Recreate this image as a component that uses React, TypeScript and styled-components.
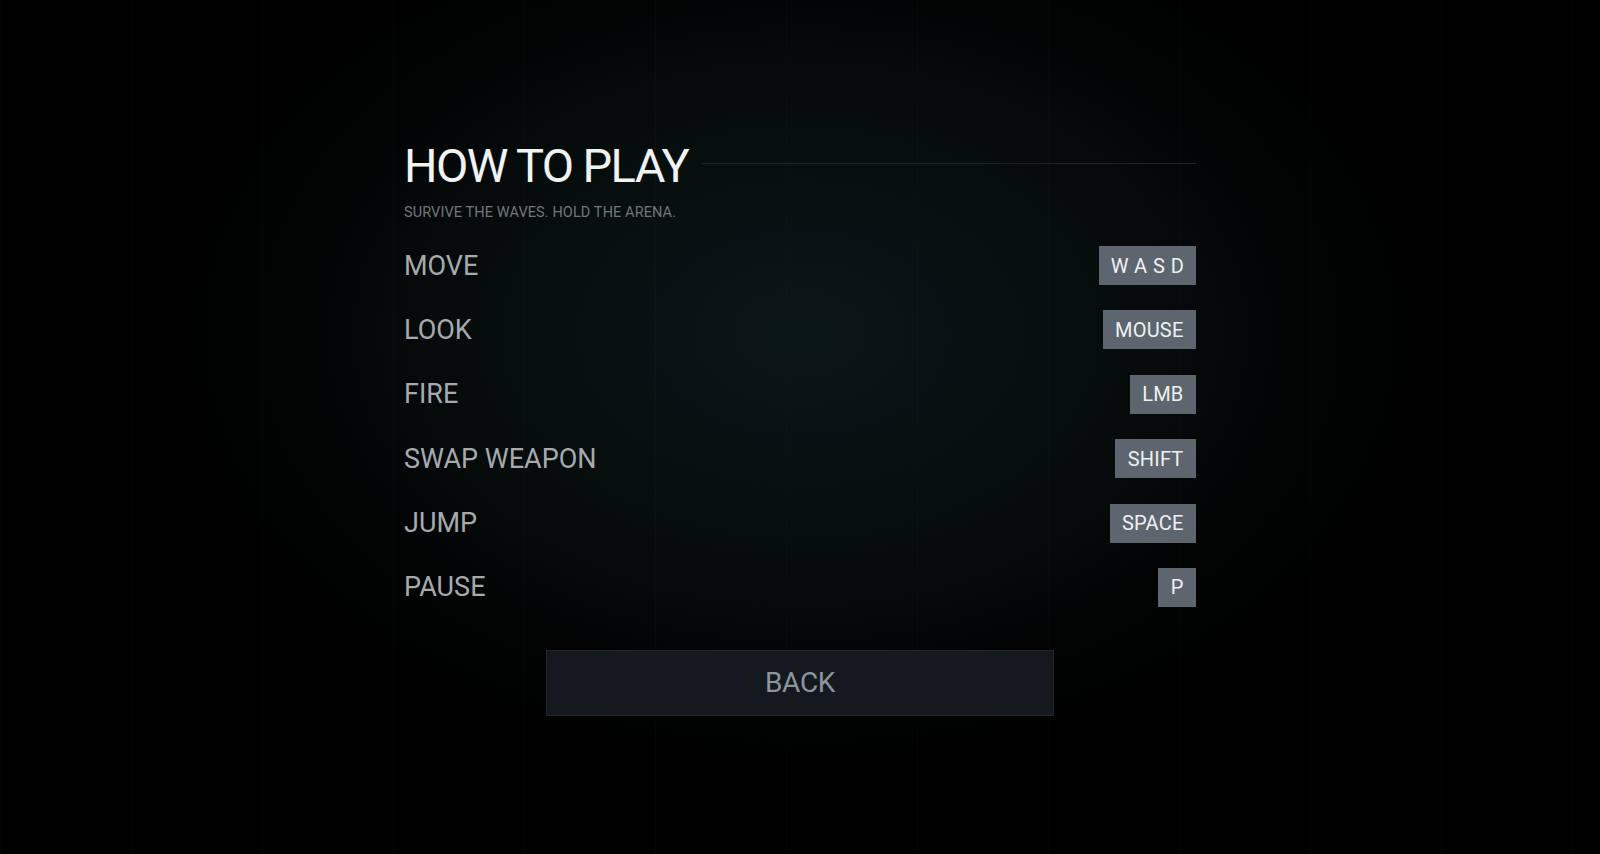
import React from 'react';
import styled, { createGlobalStyle } from 'styled-components';

const GlobalStyle = createGlobalStyle`
  html, body {
    margin: 0;
    padding: 0;
    background: #000;
  }
  * {
    box-sizing: border-box;
  }
`;

const Screen = styled.div`
  width: 100vw;
  height: 100vh;
  display: flex;
  align-items: center;
  justify-content: center;
  overflow: hidden;
  font-family: Roboto, 'Liberation Sans', sans-serif;
  background:
    repeating-linear-gradient(90deg, rgba(120, 160, 160, 0.025) 0 1px, transparent 1px 131px),
    radial-gradient(ellipse 640px 440px at 50% 39%, #0b1616 0%, #070e0e 45%, #020404 80%, #000 100%);
  background-color: #000;
`;

const Panel = styled.div`
  width: 792px;
  display: flex;
  flex-direction: column;
`;

const TitleRow = styled.div`
  display: flex;
  align-items: flex-start;
  gap: 14px;
`;

const Title = styled.h1`
  margin: 0;
  font-size: 47px;
  font-weight: 400;
  line-height: 56px;
  letter-spacing: -1.6px;
  color: #f1f2f2;
  white-space: nowrap;
`;

const Rule = styled.div`
  flex: 1;
  height: 1px;
  margin-top: 25px;
  background: #1e2428;
`;

const Subtitle = styled.p`
  margin: 10px 0 12px;
  font-size: 14.5px;
  letter-spacing: 0.1px;
  color: #71777d;
`;

const BindList = styled.div`
  display: flex;
  flex-direction: column;
`;

const BindRow = styled.div`
  height: 64.4px;
  display: flex;
  align-items: center;
  justify-content: space-between;
`;

const Action = styled.span`
  font-size: 27px;
  color: #a6aaaf;
`;

const Key = styled.span<{ $spaced?: boolean }>`
  height: 39px;
  display: inline-flex;
  align-items: center;
  padding: ${(p) => (p.$spaced ? '0 6px 0 12px' : '0 12.5px')};
  background: #5d656e;
  color: #eef1f3;
  font-size: 20px;
  letter-spacing: ${(p) => (p.$spaced ? '6px' : '0.2px')};
`;

const BackButton = styled.button`
  align-self: center;
  margin-top: 30px;
  width: 508px;
  height: 66px;
  background: #141920;
  border: 1px solid #20262d;
  color: #8e949b;
  font-family: Roboto, 'Liberation Sans', sans-serif;
  font-size: 28px;
  letter-spacing: -0.3px;
  cursor: pointer;
`;

const binds = [
  { action: 'MOVE', key: 'WASD', spaced: true },
  { action: 'LOOK', key: 'MOUSE' },
  { action: 'FIRE', key: 'LMB' },
  { action: 'SWAP WEAPON', key: 'SHIFT' },
  { action: 'JUMP', key: 'SPACE' },
  { action: 'PAUSE', key: 'P' },
];

const App: React.FC = () => {
  return (
    <Screen>
      <GlobalStyle />
      <Panel>
        <TitleRow>
          <Title>HOW TO PLAY</Title>
          <Rule />
        </TitleRow>
        <Subtitle>SURVIVE THE WAVES. HOLD THE ARENA.</Subtitle>
        <BindList>
          {binds.map((b) => (
            <BindRow key={b.action}>
              <Action>{b.action}</Action>
              <Key $spaced={b.spaced}>{b.key}</Key>
            </BindRow>
          ))}
        </BindList>
        <BackButton>BACK</BackButton>
      </Panel>
    </Screen>
  );
};

export default App;
